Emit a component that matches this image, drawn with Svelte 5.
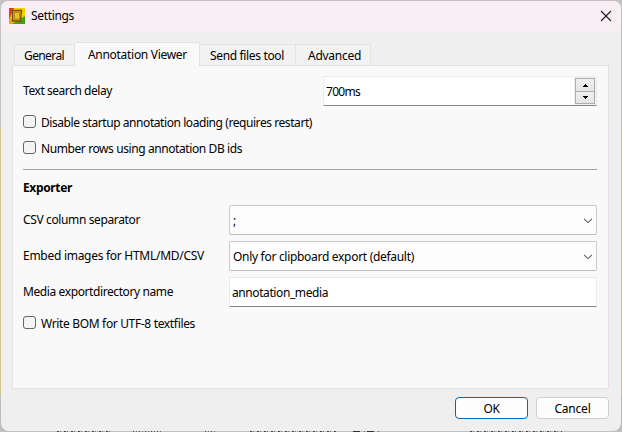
<script>
  let delay = $state('700ms');
  let directory = $state('annotation_media');
  const tabs = [
    { label: 'General', w: 61, text: 40, inset: 9 },
    { label: 'Annotation Viewer', w: 125, text: 99, inset: 13, active: true },
    { label: 'Send files tool', w: 96, text: 74, inset: 10 },
    { label: 'Advanced', w: 75, text: 53, inset: 12 }
  ];

  // Spreads the letters so a label fills its designed width.
  function fit(node, width) {
    node.style.letterSpacing = '0px';
    const natural = node.getBoundingClientRect().width;
    const gap = (width - natural) / node.textContent.length;
    node.style.letterSpacing = gap.toFixed(3) + 'px';
  }
</script>

{#snippet label(text, width)}
  <span class="label" use:fit={width}>{text}</span>
{/snippet}

{#snippet check(text, width)}
  <div class="check"><i></i>{@render label(text, width)}</div>
{/snippet}

{#snippet combo(text, width)}
  <div class="combo">
    {@render label(text, width)}
    <svg width="10" height="6" viewBox="0 0 10 6"><path d="M1 .8 5 4.6 9 .8" /></svg>
  </div>
{/snippet}

<div class="desktop">
  <main class="dialog">
    <header>
      <svg width="16" height="16" viewBox="0 0 16 16">
        <rect width="16" height="16" fill="#f4cf00" />
        <path d="M0 0h5L2 7 0 12z" fill="#e8391c" />
        <path d="M3 16 16 8v8z" fill="#46a018" />
        <path d="M0 12l3-2v6H0z" fill="#f5a21b" />
        <path d="M3.5 2.5h9l-1 10.5h-8z" fill="#d8a90c" stroke="#75520c" stroke-width="1.3" />
        <path d="M5.5 4.5h5v6.5h-5z" fill="#e5c321" stroke="#ad7f0b" stroke-width=".8" />
      </svg>
      {@render label('Settings', 43)}
      <svg class="close" width="12" height="12" viewBox="0 0 12 12"><path d="M1 1 11 11M11 1 1 11" /></svg>
    </header>

    <nav>
      {#each tabs as tab}
        <div class="tab" class:active={tab.active} style:width="{tab.w}px" style:padding-left="{tab.inset}px">{@render label(tab.label, tab.text)}</div>
      {/each}
    </nav>

    <section>
      <div class="row">
        <div class="name delay">{@render label('Text search delay', 89)}</div>
        <div class="field spin">
          {@render label(delay, 34)}
          <div class="steps">
            <b><svg width="5" height="3" viewBox="0 0 5 3"><path d="M2 0h1v1h1v1h1v1H0V2h1V1h1z" /></svg></b>
            <b><svg width="5" height="3" viewBox="0 0 5 3"><path d="M0 0h5v1H4v1H3v1H2V2H1V1H0z" /></svg></b>
          </div>
        </div>
      </div>
      {@render check('Disable startup annotation loading (requires restart)', 271)}
      {@render check('Number rows using annotation DB ids', 201)}
      <hr />
      <h2>{@render label('Exporter', 49)}</h2>
      <div class="row">
        <div class="name">{@render label('CSV column separator', 117)}</div>
        {@render combo(';', 3)}
      </div>
      <div class="row">
        <div class="name">{@render label('Embed images for HTML/MD/CSV', 181)}</div>
        {@render combo('Only for clipboard export (default)', 181)}
      </div>
      <div class="row">
        <div class="name">{@render label('Media exportdirectory name', 150)}</div>
        <div class="field">{@render label(directory, 96)}</div>
      </div>
      {@render check('Write BOM for UTF-8 textfiles', 154)}
    </section>

    <footer>
      <button class="ok">{@render label('OK', 16)}</button>
      <button>{@render label('Cancel', 36)}</button>
    </footer>
  </main>
</div>

<style>
  .desktop {
    box-sizing: border-box;
    width: 622px;
    height: 432px;
    padding: 0 1px 1px;
    overflow: hidden;
    background:
      repeating-linear-gradient(90deg, #444 0 2px, #bbb 2px 3px, #777 3px 4px, #c0c0c0 4px 7px) 57px 431px / 54px 1px no-repeat,
      repeating-linear-gradient(90deg, #444 0 1px, #bbb 1px 3px, #666 3px 4px, #c0c0c0 4px 6px) 133px 431px / 29px 1px no-repeat,
      repeating-linear-gradient(90deg, #444 0 1px, #bbb 1px 3px, #666 3px 4px, #c0c0c0 4px 6px) 205px 431px / 12px 1px no-repeat,
      repeating-linear-gradient(90deg, #444 0 2px, #bbb 2px 3px, #777 3px 4px, #c0c0c0 4px 7px) 250px 431px / 86px 1px no-repeat,
      repeating-linear-gradient(90deg, #333 0 7px, #c0c0c0 7px 11px, #666 11px 12px, #c0c0c0 12px 14px) 353px 431px / 28px 1px no-repeat,
      repeating-linear-gradient(90deg, #444 0 2px, #bbb 2px 3px, #777 3px 4px, #c0c0c0 4px 7px) 470px 431px / 92px 1px no-repeat,
      linear-gradient(#c1c1c1, #c1c1c1) 0 431px / 622px 1px no-repeat,
      linear-gradient(#c4c4c4 0 128px, #d2c694 128px 395px, #bdbdbd 395px);
    font: 12px 'Noto Sans', 'Open Sans', sans-serif;
    color: #000;
  }
  .dialog {
    box-sizing: border-box;
    height: 431px;
    border-top: 1px solid #c5c1c3;
    border-radius: 8px;
    overflow: hidden;
    background: #efefef;
  }
  .label { display: inline-block; white-space: pre; line-height: 16px; }
  header {
    display: flex;
    align-items: center;
    height: 30px;
    padding: 0 9px 0 8px;
    background: #f9eef4;
  }
  header .label { margin-left: 6px; }
  .close { margin-left: auto; }
  .close path { fill: none; stroke: #1c1c1c; stroke-width: 1.1; }
  nav { display: flex; align-items: flex-end; height: 34px; padding-left: 13px; }
  .tab {
    box-sizing: border-box;
    height: 21px;
    padding-top: 2px;
    border: 1px solid #e3e3e3;
    border-left: 0;
    border-bottom: 0;
    background: #f2f2f2;
  }
  .tab:first-child { border-left: 1px solid #e3e3e3; }
  .tab.active {
    position: relative;
    height: 24px;
    padding-top: 3px;
    margin-bottom: -1px;
    background: #f9f9f9;
  }
  section {
    box-sizing: border-box;
    width: 597px;
    height: 324px;
    margin-left: 11px;
    padding: 10px 11px 0 10px;
    border: 1px solid #e3e3e3;
    background: #f9f9f9;
  }
  .row { display: flex; align-items: center; height: 30px; margin-bottom: 6px; }
  .name { width: 206px; padding-bottom: 2px; }
  .name.delay { width: 300px; }
  .field, .combo {
    box-sizing: border-box;
    display: flex;
    align-items: center;
    flex: 1;
    height: 30px;
    padding: 1px 3px 0;
  }
  .field { padding-left: 2px; border: 1px solid #ebebeb; border-bottom-color: #868686; border-radius: 1px; background: #fff; }
  .combo { justify-content: space-between; border: 1px solid #cacaca; border-bottom-color: #bbb; border-radius: 2px; background: #fdfdfd; }
  .combo path { fill: none; stroke: #606060; stroke-width: 1.1; }
  .spin { justify-content: space-between; padding: 0 0 0 2px; }
  .spin > :global(.label) { margin-top: 1px; }
  .steps { box-sizing: border-box; width: 22px; height: 28px; padding: 1px; background: #f0f0f0; }
  .steps b {
    box-sizing: border-box;
    display: flex;
    align-items: center;
    justify-content: center;
    width: 20px;
    height: 14px;
    border: 1px solid #adadad;
    background: linear-gradient(#f0f0f0, #e5e5e5);
  }
  .steps b + b { height: 13px; margin-top: -1px; }
  .check { display: flex; align-items: center; height: 20px; }
  .row + .check { margin-top: 7px; }
  .check + .check { margin-top: 6px; }
  .check i { box-sizing: border-box; width: 13px; height: 13px; margin: -3px 5px 0 0; border: 1px solid #666; border-radius: 3px; background: #f4f4f4; }
  hr { height: 1px; margin: 10px 0 0; border: 0; background: #a0a0a0; }
  h2 { height: 16px; margin: 9px 0 10px; font-size: 12px; font-weight: 700; }
  footer { display: flex; justify-content: flex-end; gap: 8px; padding: 8px 12px 0 0; }
  button {
    box-sizing: border-box;
    width: 73px;
    height: 22px;
    padding: 0;
    border: 1px solid #d0d0d0;
    border-radius: 4px;
    background: #fdfdfd;
    font: inherit;
    color: inherit;
  }
  button.ok { border-color: #0067c0; }
</style>
